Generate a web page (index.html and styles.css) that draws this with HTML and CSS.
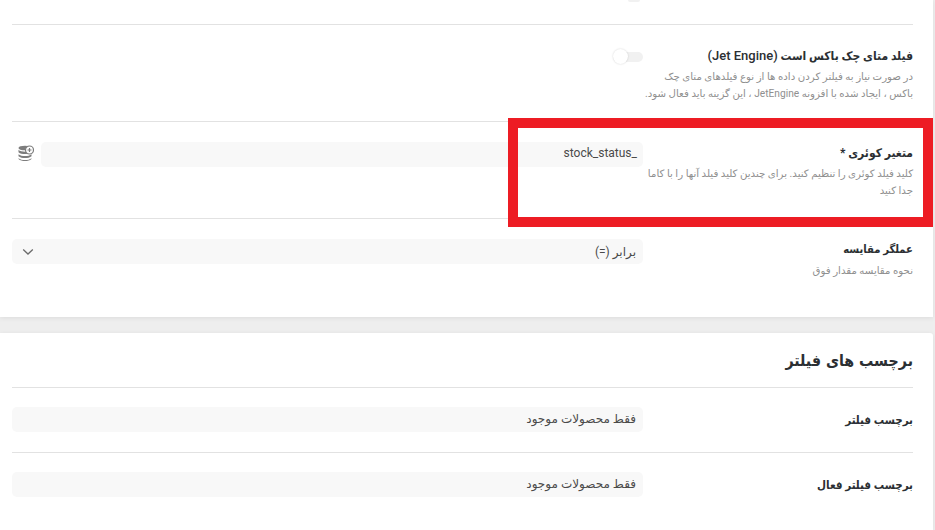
FILE: index.html
```html
<!DOCTYPE html>
<html lang="fa" dir="rtl">
<head>
<meta charset="utf-8">
<title>تنظیمات فیلتر</title>
<link rel="stylesheet" href="styles.css">
</head>
<body>
<div class="page">
  <section class="card card-first">
    <div class="top-stub"><span class="stub-knob"></span></div>
    <div class="row">
      <div class="label">
        <div class="title">فیلد متای چک باکس است <span class="latin">(Jet Engine)</span></div>
        <div class="desc">در صورت نیاز به فیلتر کردن داده ها از نوع فیلدهای متای چک باکس ، ایجاد شده با افزونه JetEngine ، این گزینه باید فعال شود.</div>
      </div>
      <div class="control">
        <span class="toggle"><span class="knob"></span></span>
      </div>
    </div>
    <div class="row">
      <div class="label">
        <div class="title">متغیر کوئری *</div>
        <div class="desc">کلید فیلد کوئری را تنظیم کنید. برای چندین کلید فیلد آنها را با کاما جدا کنید</div>
      </div>
      <div class="control control-icon">
        <div class="field field-key">_stock_status</div>
        <svg class="db-icon" width="16" height="17" viewBox="0 0 16 17" aria-hidden="true">
          <ellipse cx="7" cy="3" rx="6.500" ry="2.300" fill="#7d7d7d"/>
          <path d="M.5 4.800C1.800 6.200 4.500 6.700 7 6.700c.7 0 1.200 0 1.800-.1l.9 2.300c-.9.200-1.800.2-2.700.2-2.500 0-5-.5-6.500-1.900z" fill="#7d7d7d"/>
          <path d="M.5 9.200c1.500 1.300 4 1.800 6.500 1.800s5-.5 6.500-1.800v2c-1.500 1.300-4 1.800-6.500 1.800s-5-.5-6.500-1.800z" fill="#7d7d7d"/>
          <path d="M.5 13.200c1.500 1.300 4 1.800 6.500 1.800s5-.5 6.500-1.800v.9c-1.500 1.400-4 2-6.500 2s-5-.6-6.500-2z" fill="#7d7d7d"/>
          <circle cx="11.500" cy="5" r="4" fill="#fff" stroke="#7d7d7d" stroke-width="1.200"/>
          <path d="M11.500 3v4M9.500 5h4" stroke="#7d7d7d" stroke-width="1.200"/>
        </svg>
      </div>
    </div>
    <div class="row row-last">
      <div class="label">
        <div class="title title-narrow">عملگر مقایسه</div>
        <div class="desc">نحوه مقایسه مقدار فوق</div>
      </div>
      <div class="control">
        <div class="field field-select">
          <span>برابر (=)</span>
          <svg class="chevron" width="12" height="8" viewBox="0 0 12 8" aria-hidden="true"><path d="M1.200 1.500 6 6l4.800-4.500" fill="none" stroke="#6b6b6b" stroke-width="1.300"/></svg>
        </div>
      </div>
    </div>
  </section>
  <section class="card card-second">
    <h2 class="heading">برچسب های فیلتر</h2>
    <div class="row row-slim">
      <div class="label"><div class="title">برچسب فیلتر</div></div>
      <div class="control"><div class="field">فقط محصولات موجود</div></div>
    </div>
    <div class="row row-slim row-last">
      <div class="label"><div class="title">برچسب فیلتر فعال</div></div>
      <div class="control"><div class="field">فقط محصولات موجود</div></div>
    </div>
  </section>
  <div class="highlight"></div>
</div>
</body>
</html>
```
FILE: styles.css
```css
* { box-sizing: border-box; }
html, body { margin: 0; height: 100%; }
body {
  background: #eeeeee;
  color: #23282d;
  font-family: Roboto, "DejaVu Sans", sans-serif;
  overflow: hidden;
}
.page {
  position: relative;
  width: 935px;
  height: 530px;
  overflow: hidden;
  padding-right: 2px;
  display: flex;
  flex-direction: column;
  gap: 16px;
  align-items: stretch;
}
.card {
  background: #fff;
  width: 933px;
  padding: 0 20px 0 12px;
  box-shadow: 0 1px 5px rgba(0, 0, 0, .08);
}
.card-first { height: 317px; }
.card-second { flex: 1; border-radius: 0 3px 0 0; }
.top-stub {
  height: 25px;
  border-bottom: 1px solid #e2e2e2;
  padding-right: 273px;
}
.stub-knob {
  display: block;
  width: 12px;
  height: 2px;
  background: #f1f1f1;
  border-radius: 0 0 6px 6px;
}
.row {
  display: flex;
  align-items: flex-start;
  height: 97px;
  padding-top: 20px;
  border-bottom: 1px solid #e2e2e2;
}
.row-last { border-bottom: 0; }
.row-slim {
  height: 65px;
  padding-top: 19px;
}
.label { width: 270px; flex: none; }
.title {
  font-family: Roboto, "DejaVu Sans Condensed", "DejaVu Sans", sans-serif;
  font-stretch: condensed;
  font-size: 12px;
  font-weight: 700;
  line-height: 22px;
  color: #2b2f33;
}
.title-narrow { font-size: 11.200px; }
.latin {
  font-family: Roboto, sans-serif;
  font-stretch: normal;
  font-size: 13px;
  font-weight: 500;
}
.row-slim .title { font-size: 11.500px; line-height: 27px; }
.desc {
  margin-top: 1px;
  font-size: 10.200px;
  line-height: 17px;
  color: #8f8f8f;
}
.control { flex: 1; min-width: 0; }
.control-icon {
  display: flex;
  align-items: flex-start;
  gap: 7px;
  padding-left: 6px;
}
.field {
  height: 25px;
  background: #f8f8f8;
  border-radius: 5px;
  padding: 0 7px;
  font-size: 12px;
  line-height: 24px;
  color: #4a4a4a;
  flex: 1;
}
.field-key { padding-right: 6px; line-height: 22px; }
.field-select {
  display: flex;
  justify-content: space-between;
  align-items: center;
}
.chevron { margin-left: 3px; }
.db-icon { flex: none; margin-top: 3px; }
.toggle {
  display: block;
  position: relative;
  width: 30px;
  height: 10px;
  margin-top: 7px;
  background: #f1f1f1;
  border-radius: 5px;
}
.knob {
  position: absolute;
  left: 0;
  top: -3px;
  width: 15px;
  height: 15px;
  border-radius: 50%;
  background: #fff;
  box-shadow: 0 0 2px rgba(0, 0, 0, .18);
}
.heading {
  margin: 0;
  height: 55px;
  font-family: "DejaVu Sans Condensed", "DejaVu Sans", sans-serif;
  font-stretch: condensed;
  font-size: 15.800px;
  font-weight: 700;
  line-height: 56px;
  color: #2b2f33;
  border-bottom: 1px solid #e2e2e2;
}
.highlight {
  position: absolute;
  left: 508px;
  top: 118px;
  width: 425px;
  height: 109px;
  border: 10px solid #ed1c24;
}
```
